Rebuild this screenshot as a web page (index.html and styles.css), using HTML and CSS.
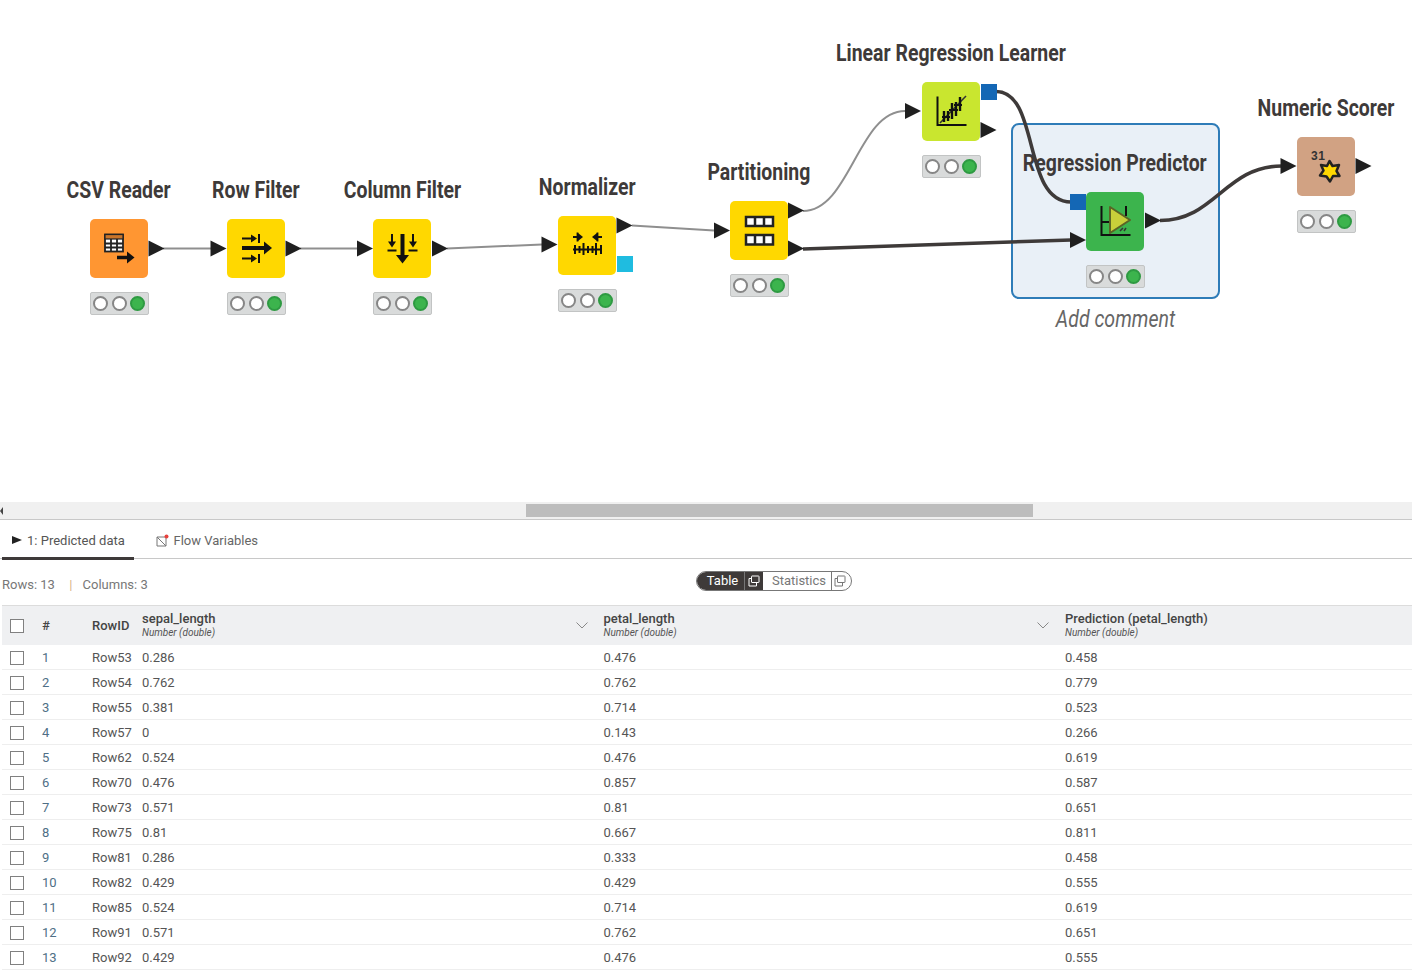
FILE: index.html
```html
<!DOCTYPE html>
<html lang="en">
<head>
    <meta charset="UTF-8">
    <title>Workflow</title>
    <link rel="stylesheet" href="styles.css">
</head>
<body>
    <div class="canvas">
        <div class="comment-box"></div>
        <div class="comment-text">Add comment</div>

        <div class="node node-csv">
            <div class="node-label">CSV Reader</div>
            <div class="node-icon orange">
                <svg width="58" height="58" viewBox="0 0 58 58">
                    <rect x="15" y="15.500" width="18" height="17" fill="#fff" stroke="#222" stroke-width="1.800"/>
                    <rect x="15" y="15.500" width="18" height="4.500" fill="#c8742a" stroke="#222" stroke-width="1.200"/>
                    <path d="M21 20v12M27 20v12M15 24.500h18M15 28.500h18" stroke="#222" stroke-width="1.800"/>
                    <path d="M27 38.500h12" stroke="#111" stroke-width="3.500"/>
                    <path d="M37 32.500l7.500 6-7.500 6z" fill="#111"/>
                </svg>
            </div>
            <div class="lights"><i></i><i></i><i class="on"></i></div>
        </div>

        <div class="node node-row">
            <div class="node-label">Row Filter</div>
            <div class="node-icon yellow">
                <svg width="58" height="58" viewBox="0 0 58 58">
                    <path d="M15 19.500h11M15 39.500h11" stroke="#111" stroke-width="2"/>
                    <path d="M24 15.500l6 4-6 4zM24 35.500l6 4-6 4z" fill="#111"/>
                    <path d="M32 15v9M32 35v9" stroke="#111" stroke-width="2"/>
                    <path d="M15 29h24" stroke="#111" stroke-width="4"/>
                    <path d="M37 22.500l8 6.500-8 6.500z" fill="#111"/>
                </svg>
            </div>
            <div class="lights"><i></i><i></i><i class="on"></i></div>
        </div>

        <div class="node node-column">
            <div class="node-label">Column Filter</div>
            <div class="node-icon yellow">
                <svg width="58" height="58" viewBox="0 0 58 58">
                    <path d="M19 15v9M40 15v9" stroke="#111" stroke-width="2"/>
                    <path d="M15 22.500l4 6 4-6zM36 22.500l4 6 4-6z" fill="#111"/>
                    <path d="M14.500 31.500h9M35.500 31.500h9" stroke="#111" stroke-width="2"/>
                    <path d="M29.500 15v24" stroke="#111" stroke-width="4"/>
                    <path d="M23 36l6.500 8.500 6.500-8.500z" fill="#111"/>
                </svg>
            </div>
            <div class="lights"><i></i><i></i><i class="on"></i></div>
        </div>

        <div class="node node-normalizer">
            <div class="node-label">Normalizer</div>
            <div class="node-icon yellow">
                <svg width="58" height="58" viewBox="0 0 58 58">
                    <path d="M15 33.500h29" stroke="#111" stroke-width="2"/>
                    <path d="M17 29v9M21.500 30v7M25.500 27v12M30 30v7M34.500 30v7M38 27v12M43 29v9" stroke="#111" stroke-width="2"/>
                    <path d="M15 21h6M44 21h-6M19.500 16.500v9M39.500 16.500v9" stroke="#111" stroke-width="1.800"/>
                    <path d="M20 17l5 4-5 4zM39 17l-5 4 5 4z" fill="#111"/>
                </svg>
            </div>
            <div class="lights"><i></i><i></i><i class="on"></i></div>
        </div>

        <div class="node node-partitioning">
            <div class="node-label">Partitioning</div>
            <div class="node-icon yellow">
                <svg width="58" height="58" viewBox="0 0 58 58">
                    <path d="M16 16h27v9h-27zM16 34h27v9.500h-27z" fill="#fff" stroke="#222" stroke-width="2.500"/>
                    <path d="M25 16v9M34 16v9M25 34v9.500M34 34v9.500" stroke="#222" stroke-width="2.500"/>
                </svg>
            </div>
            <div class="lights"><i></i><i></i><i class="on"></i></div>
        </div>

        <div class="node node-learner">
            <div class="node-label">Linear Regression Learner</div>
            <div class="node-icon lime">
                <svg width="58" height="58" viewBox="0 0 58 58">
                    <path d="M15.500 14.500v28.500h29" fill="none" stroke="#111" stroke-width="2"/>
                    <path d="M18 41l26-27" stroke="#333" stroke-width="1.500"/>
                    <path d="M22 29v11M26 29v10M30 21v16M34 20v14M38 15v14" stroke="#111" stroke-width="2.400"/>
                    <path d="M20 35h8M27 28h9M32 23h8" stroke="#111" stroke-width="1.800"/>
                </svg>
            </div>
            <div class="lights"><i></i><i></i><i class="on"></i></div>
        </div>

        <div class="node node-predictor">
            <div class="node-label">Regression Predictor</div>
            <div class="node-icon green">
                <svg width="58" height="58" viewBox="0 0 58 58">
                    <path d="M15.500 14v29h29M15.500 30h8M40 14v10" fill="none" stroke="#111" stroke-width="2"/>
                    <path d="M34 39l3-3M38 39l2-3" stroke="#333" stroke-width="1.500"/>
                    <path d="M24 15l20 13-20 13z" fill="#c8cf3a" stroke="#5a6426" stroke-width="2" stroke-linejoin="round"/>
                </svg>
            </div>
            <div class="lights"><i></i><i></i><i class="on"></i></div>
        </div>

        <div class="node node-scorer">
            <div class="node-label">Numeric Scorer</div>
            <div class="node-icon brown">
                <svg width="58" height="58" viewBox="0 0 58 58">
                    <text x="14" y="23" class="score-text">31</text>
                    <path d="M32.500 24l3 5 6.500-1-2.500 6 3 5-6.500 0-3 5.500-3.500-5-6.500-1 3.500-5-2.500-5.500 6 1z" fill="#ffd800" stroke="#222" stroke-width="2.500" stroke-linejoin="round"/>
                </svg>
            </div>
            <div class="lights"><i></i><i></i><i class="on"></i></div>
        </div>

        <svg class="wires" width="1412" height="502" viewBox="0 0 1412 502">
            <g class="wire-thin">
                <path d="M163 248.500H212"/>
                <path d="M300 248.500H358"/>
                <path d="M447 248.500L542 244.500"/>
                <path d="M632 225.500L714 230.500"/>
                <path d="M803 211C850 211 858 111 905 111"/>
            </g>
            <g class="wire-thick">
                <path d="M803 249L1071 240"/>
                <path d="M996 91.500C1040 91.500 1022 202 1071 202"/>
                <path d="M1160 220.500C1215 220.500 1225 166 1282 166"/>
            </g>
            <g class="port">
                <path d="M148.500 240.500l16 8-16 8z"/>
                <path d="M210.500 240.500l16 8-16 8z"/>
                <path d="M285.500 240.500l16 8-16 8z"/>
                <path d="M357 240.500l16 8-16 8z"/>
                <path d="M432 240.500l16 8-16 8z"/>
                <path d="M541.500 236.500l16 8-16 8z"/>
                <path d="M616.500 217.500l16 8-16 8z"/>
                <path d="M714 222.500l16 8-16 8z"/>
                <path d="M788 202.500l16 8-16 8z"/>
                <path d="M788 240.500l16 8-16 8z"/>
                <path d="M905 103l16 8-16 8z"/>
                <path d="M980.500 122l16 8-16 8z"/>
                <path d="M1070 232l16 8-16 8z"/>
                <path d="M1145 212.500l16 8-16 8z"/>
                <path d="M1280.500 158l16 8-16 8z"/>
                <path d="M1355.500 158l16 8-16 8z"/>
            </g>
            <rect x="617" y="256" width="16" height="16" fill="#1fbce0"/>
            <rect x="981" y="84" width="16" height="16" fill="#1467b5"/>
            <rect x="1070" y="194" width="16" height="16" fill="#1467b5"/>
        </svg>
    </div>

    <div class="scrollbar">
        <span class="scroll-arrow"></span>
        <div class="scroll-thumb"></div>
    </div>

    <div class="tabs">
        <div class="tab active"><span class="tab-arrow"></span>1: Predicted data</div>
        <div class="tab">
            <svg class="tab-icon" width="13" height="13" viewBox="0 0 13 13">
                <path d="M1 3h9v9H1zM1 3l9 9" fill="none" stroke="#777" stroke-width="1"/>
                <circle cx="10.500" cy="2.500" r="2" fill="#e8413c"/>
            </svg>
            Flow Variables
        </div>
    </div>

    <div class="summary">
        <div class="summary-info">Rows: 13 <span class="sep">|</span> Columns: 3</div>
        <div class="toggle">
            <span class="toggle-item dark first">Table</span>
            <span class="toggle-icon dark">
                <svg width="12" height="12" viewBox="0 0 12 12"><path d="M3.500 1.500a.5.5 0 0 1 .5-.5h6.500a.5.5 0 0 1 .5.5V7a.5.5 0 0 1-.5.5H4a.5.5 0 0 1-.5-.5zM3.500 3.500H1V11h7.500V7.500" fill="none" stroke="#fff" stroke-width="1"/></svg>
            </span>
            <span class="toggle-item stats">Statistics</span>
            <span class="toggle-icon last">
                <svg width="12" height="12" viewBox="0 0 12 12"><path d="M3.500 1.500a.5.5 0 0 1 .5-.5h6.500a.5.5 0 0 1 .5.5V7a.5.5 0 0 1-.5.5H4a.5.5 0 0 1-.5-.5zM3.500 3.500H1V11h7.500V7.500" fill="none" stroke="#777" stroke-width="1"/></svg>
            </span>
        </div>
    </div>

    <div class="table">
        <div class="row head">
            <div class="cell-check"><span class="box"></span></div>
            <div class="cell-num">#</div>
            <div class="cell-id">RowID</div>
            <div class="cell-col">
                <div><div class="col-name">sepal_length</div><div class="col-type">Number (double)</div></div>
                <svg class="chevron" width="12" height="7" viewBox="0 0 12 7"><path d="M.5.5L6 6 11.500.5" fill="none" stroke="#888" stroke-width="1"/></svg>
            </div>
            <div class="cell-col">
                <div><div class="col-name">petal_length</div><div class="col-type">Number (double)</div></div>
                <svg class="chevron" width="12" height="7" viewBox="0 0 12 7"><path d="M.5.5L6 6 11.500.5" fill="none" stroke="#888" stroke-width="1"/></svg>
            </div>
            <div class="cell-col">
                <div><div class="col-name">Prediction (petal_length)</div><div class="col-type">Number (double)</div></div>
            </div>
        </div>
        <div class="row"><div class="cell-check"><span class="box"></span></div><div class="cell-num">1</div><div>Row53</div><div>0.286</div><div>0.476</div><div>0.458</div></div>
        <div class="row"><div class="cell-check"><span class="box"></span></div><div class="cell-num">2</div><div>Row54</div><div>0.762</div><div>0.762</div><div>0.779</div></div>
        <div class="row"><div class="cell-check"><span class="box"></span></div><div class="cell-num">3</div><div>Row55</div><div>0.381</div><div>0.714</div><div>0.523</div></div>
        <div class="row"><div class="cell-check"><span class="box"></span></div><div class="cell-num">4</div><div>Row57</div><div>0</div><div>0.143</div><div>0.266</div></div>
        <div class="row"><div class="cell-check"><span class="box"></span></div><div class="cell-num">5</div><div>Row62</div><div>0.524</div><div>0.476</div><div>0.619</div></div>
        <div class="row"><div class="cell-check"><span class="box"></span></div><div class="cell-num">6</div><div>Row70</div><div>0.476</div><div>0.857</div><div>0.587</div></div>
        <div class="row"><div class="cell-check"><span class="box"></span></div><div class="cell-num">7</div><div>Row73</div><div>0.571</div><div>0.81</div><div>0.651</div></div>
        <div class="row"><div class="cell-check"><span class="box"></span></div><div class="cell-num">8</div><div>Row75</div><div>0.81</div><div>0.667</div><div>0.811</div></div>
        <div class="row"><div class="cell-check"><span class="box"></span></div><div class="cell-num">9</div><div>Row81</div><div>0.286</div><div>0.333</div><div>0.458</div></div>
        <div class="row"><div class="cell-check"><span class="box"></span></div><div class="cell-num">10</div><div>Row82</div><div>0.429</div><div>0.429</div><div>0.555</div></div>
        <div class="row"><div class="cell-check"><span class="box"></span></div><div class="cell-num">11</div><div>Row85</div><div>0.524</div><div>0.714</div><div>0.619</div></div>
        <div class="row"><div class="cell-check"><span class="box"></span></div><div class="cell-num">12</div><div>Row91</div><div>0.571</div><div>0.762</div><div>0.651</div></div>
        <div class="row"><div class="cell-check"><span class="box"></span></div><div class="cell-num">13</div><div>Row92</div><div>0.429</div><div>0.476</div><div>0.555</div></div>
    </div>
</body>
</html>
```

FILE: styles.css
```css
* {
    margin: 0;
    padding: 0;
    box-sizing: border-box;
}
body {
    background-color: #fff;
    font-family: Roboto, "Liberation Sans", sans-serif;
    font-size: 13px;
    color: #555;
    overflow: hidden;
}

/* workflow canvas */
.canvas {
    position: relative;
    height: 502px;
}
.wires {
    position: absolute;
    left: 0;
    top: 0;
    pointer-events: none;
}
.wire-thin path {
    fill: none;
    stroke: #8f8f8f;
    stroke-width: 2;
}
.wire-thick path {
    fill: none;
    stroke: #3e3a39;
    stroke-width: 3.5;
}
.port path {
    fill: #1f1f1f;
}
.comment-box {
    position: absolute;
    left: 1011px;
    top: 123px;
    width: 209px;
    height: 176px;
    background-color: #e9f0f7;
    border: 2px solid #2e7cb8;
    border-radius: 8px;
}
.comment-text {
    position: absolute;
    left: 1011px;
    top: 306px;
    width: 209px;
    text-align: center;
    font-size: 23px;
    line-height: 28px;
    font-style: italic;
    color: #666;
    transform: scaleX(.85);
}
.node {
    position: absolute;
    width: 58px;
    display: flex;
    flex-direction: column;
    align-items: center;
}
.node-csv { left: 90px; top: 177px; }
.node-row { left: 227px; top: 177px; }
.node-column { left: 373px; top: 177px; }
.node-normalizer { left: 558px; top: 174px; }
.node-partitioning { left: 730px; top: 159px; }
.node-learner { left: 922px; top: 40px; }
.node-predictor { left: 1086px; top: 150px; }
.node-scorer { left: 1297px; top: 95px; }
.node-label {
    height: 27px;
    padding-top: 1px;
    line-height: 26px;
    margin-bottom: 15px;
    font-size: 23px;
    font-weight: 700;
    white-space: nowrap;
    color: #3e3a39;
    transform: scaleX(.845);
}
.node-icon {
    width: 58.500px;
    height: 58.500px;
    flex-shrink: 0;
    border-radius: 5px;
}
.node-icon svg {
    display: block;
}
.orange { background-color: #ff9632; }
.yellow { background-color: #ffd800; }
.lime { background-color: #c9e62f; }
.green { background-color: #3cb44d; }
.brown { background-color: #d1a283; }
.score-text {
    font-family: "Liberation Sans", sans-serif;
    font-size: 12px;
    font-weight: 700;
    letter-spacing: .5px;
    fill: #333;
}
.lights {
    display: flex;
    align-items: center;
    justify-content: center;
    gap: 3.500px;
    width: 59px;
    height: 23px;
    margin-top: 14.500px;
    background-color: #d9dbdb;
    border: 1px solid #c2c4c4;
    border-radius: 2px;
}
.lights i {
    width: 15px;
    height: 15px;
    border-radius: 50%;
    background-color: #fff;
    border: 2px solid #868686;
}
.lights i.on {
    background-color: #3cb44d;
    border-color: #2e9a42;
}

/* scrollbar under canvas */
.scrollbar {
    position: relative;
    height: 18px;
    padding: 2px 0 0 526px;
    background-color: #f0f0f0;
    border-bottom: 1px solid #c8c8c8;
}
.scroll-thumb {
    width: 507px;
    height: 13px;
    background-color: #bdbdbd;
}
.scroll-arrow {
    position: absolute;
    left: 0;
    top: 5px;
    border-top: 4px solid transparent;
    border-bottom: 4px solid transparent;
    border-right: 3px solid #444;
}

/* tabs */
.tabs {
    display: flex;
    height: 39px;
    padding-left: 2px;
    border-bottom: 1px solid #c8c8c8;
}
.tab {
    display: flex;
    align-items: center;
    height: 40px;
    color: #666;
    font-size: 13px;
    white-space: nowrap;
    padding-right: 10px;
    padding-left: 21.500px;
}
.tab.active {
    width: 132px;
    padding-top: 3px;
    padding-left: 10px;
    padding-right: 0;
    border-bottom: 3px solid #3e3a39;
    color: #555;
}
.tab-arrow {
    width: 0;
    height: 0;
    margin-right: 5px;
    border-left: 10px solid #222;
    border-top: 4.500px solid transparent;
    border-bottom: 4.500px solid transparent;
}
.tab-icon {
    margin-right: 5px;
}

/* summary line */
.summary {
    display: flex;
    align-items: center;
    height: 46px;
    padding-left: 2px;
}
.summary-info {
    width: 694px;
    color: #777;
    font-size: 13px;
    padding-top: 5px;
}
.sep {
    margin: 0 7px 0 11px;
    color: #d8b48a;
}
.toggle {
    display: flex;
    height: 20px;
    border: 1px solid #777;
    border-radius: 10px;
    overflow: hidden;
    font-size: 13px;
    line-height: 18px;
    margin-top: -2px;
}
.toggle-item {
    color: #777;
    text-align: center;
}
.toggle-item.first {
    width: 47px;
    padding-left: 4px;
}
.toggle-item.stats {
    width: 68px;
    padding-left: 4px;
}
.toggle-icon {
    display: flex;
    align-items: center;
    justify-content: center;
    width: 19px;
    border-left: 1px solid #777;
}
.toggle-icon.last {
    width: 20px;
    padding-right: 3px;
}
.dark {
    background-color: #3e3a39;
    color: #fff;
}

/* data table */
.table {
    margin-left: 2px;
}
.row {
    display: grid;
    grid-template-columns: 40px 50px 50px 461.500px 461.500px 1fr;
    align-items: center;
    height: 25px;
    border-bottom: 1px solid #eeeeee;
    font-size: 13px;
    color: #555;
}
.row.head {
    height: 40px;
    background-color: #eff0f2;
    border-top: 1px solid #dcdcdc;
    border-bottom: none;
    color: #444;
}
.cell-check {
    padding: 1px 0 0 8px;
    display: flex;
}
.box {
    width: 14px;
    height: 14px;
    background-color: #fff;
    border: 1px solid #808080;
}
.cell-num {
    color: #4f6f86;
}
.head .cell-num,
.cell-id {
    color: #444;
    font-weight: 500;
}
.cell-col {
    display: flex;
    align-items: center;
    justify-content: space-between;
}
.col-name {
    font-weight: 500;
    font-size: 13px;
    line-height: 14px;
}
.col-type {
    font-size: 10px;
    line-height: 13px;
    font-style: italic;
    color: #555;
}
.chevron {
    margin-right: 16px;
}
```
